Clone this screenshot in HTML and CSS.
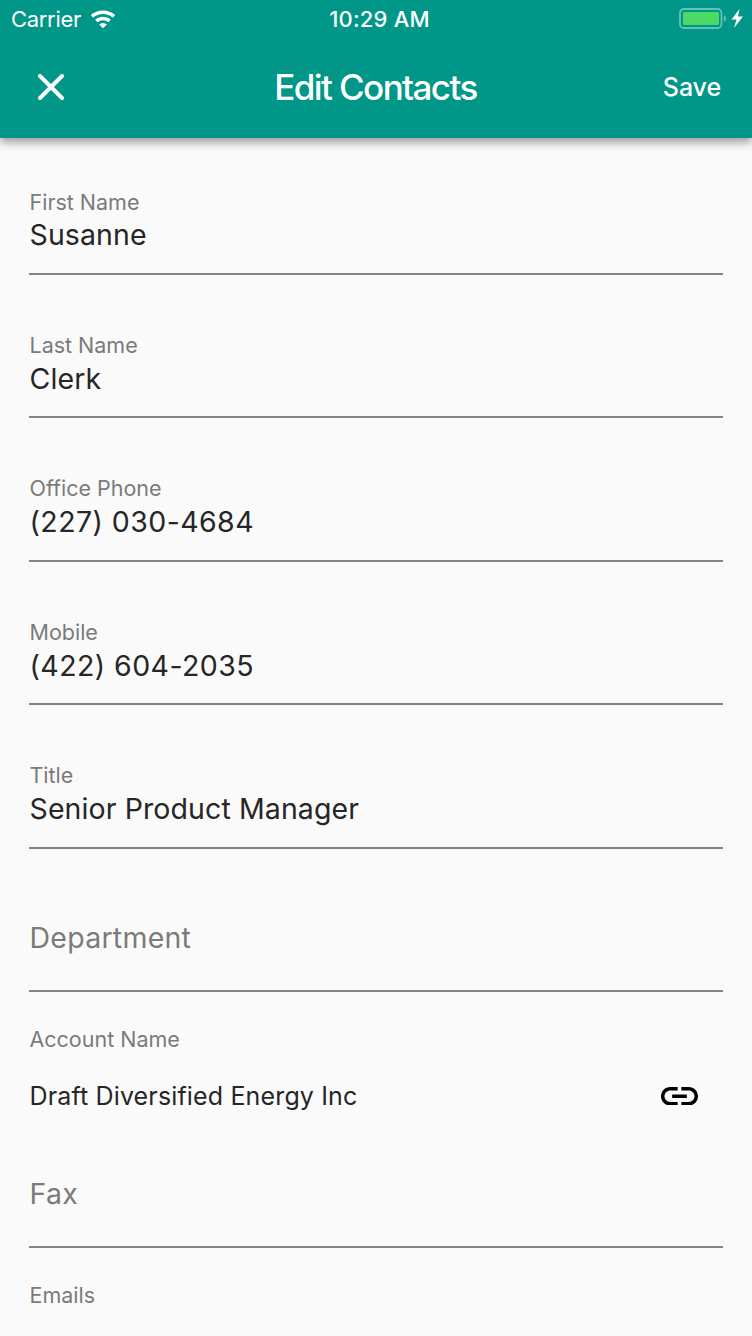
FILE: index.html
```html
<!DOCTYPE html>
<html lang="en">
<head>
<meta charset="utf-8">
<title>Edit Contacts</title>
<link rel="stylesheet" href="styles.css">
</head>
<body>
<header class="top">
  <div class="status">
    <div class="carrier"><span class="carrier-name">Carrier</span>
      <svg class="wifi" width="26" height="19" viewBox="0 0 26 19" fill="none"><path d="M2 6.4a16.5 16.5 0 0 1 22 0M6.3 10.9a10.2 10.2 0 0 1 13.4 0" stroke="#fff" stroke-width="3.5"/><path d="M13 18.3l-3.9-3.8a5.8 5.8 0 0 1 7.8 0z" fill="#fff"/></svg>
    </div>
    <span class="clock">10:29 AM</span>
    <svg class="battery" width="66" height="22" viewBox="0 0 66 22"><rect x="1" y="1" width="41.5" height="19" rx="4" fill="none" stroke="#66c0b8" stroke-width="1.8"/><rect x="4" y="4" width="36" height="13" rx="1.5" fill="#4cd964"/><path d="M45 7.2c2.6 1 2.6 5.6 0 6.6z" fill="#66c0b8"/><path d="M60.5 1l-8 10.5h5l-2.5 8.5 9-11.5h-5z" fill="#fff"/></svg>
  </div>
  <nav class="bar">
    <svg class="close" width="26" height="26" viewBox="0 0 26 26"><path d="M2 2l22 22M24 2l-22 22" stroke="#fff" stroke-width="3.9" stroke-linecap="round"/></svg>
    <h1 class="heading">Edit Contacts</h1>
    <span class="save">Save</span>
  </nav>
</header>
<main class="form">
  <div class="field"><span class="label">First Name</span><span class="value">Susanne</span></div>
  <div class="field"><span class="label">Last Name</span><span class="value">Clerk</span></div>
  <div class="field"><span class="label">Office Phone</span><span class="value number">(227) 030-4684</span></div>
  <div class="field"><span class="label">Mobile</span><span class="value number">(422) 604-2035</span></div>
  <div class="field"><span class="label">Title</span><span class="value">Senior Product Manager</span></div>
  <div class="field empty"><span class="value hint">Department</span></div>
  <div class="account"><span class="label">Account Name</span>
    <div class="account-row"><span class="account-value">Draft Diversified Energy Inc</span>
      <svg class="link" width="37" height="18.5" viewBox="2 7 20 10"><path d="M3.9 12c0-1.71 1.39-3.1 3.1-3.1h4V7H7c-2.76 0-5 2.24-5 5s2.24 5 5 5h4v-1.9H7c-1.71 0-3.1-1.39-3.1-3.1zM8 13h8v-2H8v2zm9-6h-4v1.9h4c1.71 0 3.1 1.39 3.1 3.1s-1.39 3.1-3.1 3.1h-4V17h4c2.76 0 5-2.24 5-5s-2.24-5-5-5z"/></svg>
    </div>
  </div>
  <div class="field fax"><span class="value hint">Fax</span></div>
  <span class="label emails">Emails</span>
</main>
</body>
</html>
```
FILE: styles.css
```css
* { box-sizing: border-box; }
body { margin: 0; height: 1336px; overflow: hidden; background: #fafafa; color: #262626; font-family: Inter, "Liberation Sans", sans-serif; }
span, h1 { white-space: nowrap; }
.top { height: 138px; background: #009688; color: #fff; box-shadow: 0 4px 9px rgba(0,0,0,.4); }
.status { display: grid; grid-template-columns: 1fr auto 1fr; height: 40px; align-items: center; padding: 0 7px 2px 11px; }
.carrier { display: flex; align-items: center; gap: 9.5px; }
.carrier-name { font-size: 22px; letter-spacing: -.32px; }
.clock { font-size: 22px; font-weight: 550; letter-spacing: .2px; padding-left: 3px; }
.battery { justify-self: end; }
.bar { display: grid; grid-template-columns: 1fr auto 1fr; align-items: center; height: 96px; padding: 0 31px 2px 38px; }
.heading { margin: 0 8px 0 0; font-size: 35px; font-weight: 550; letter-spacing: -1.6px; }
.save { justify-self: end; font-size: 25px; font-weight: 550; letter-spacing: -.1px; }
.form { padding: 0 29px 0 30px; }
.field { display: flex; flex-direction: column; height: 143.4px; border-bottom: 2px solid #858585; margin-left: -1px; padding: 57px 0 0 .5px; }
.field:first-child { height: 137px; padding-top: 51px; }
.field:first-child .value { line-height: 40px; }
.label { display: block; font-size: 21.5px; line-height: 26px; color: #7b7b7b; letter-spacing: -.01px; }
.value { font-size: 28.5px; line-height: 41px; letter-spacing: .1px; }
.number { letter-spacing: .43px; }
.hint { color: #7b7b7b; letter-spacing: .25px; }
.empty { padding-top: 68px; }
.account { padding-top: 34px; height: 142px; margin-left: -.5px; }
.account-row { display: flex; justify-content: space-between; align-items: center; height: 40px; margin-top: 24px; padding-right: 25px; }
.account-value { font-size: 25px; letter-spacing: .15px; }
.fax { height: 114px; padding-top: 39px; }
.emails { margin-top: 34px; margin-left: -.5px; }
```
